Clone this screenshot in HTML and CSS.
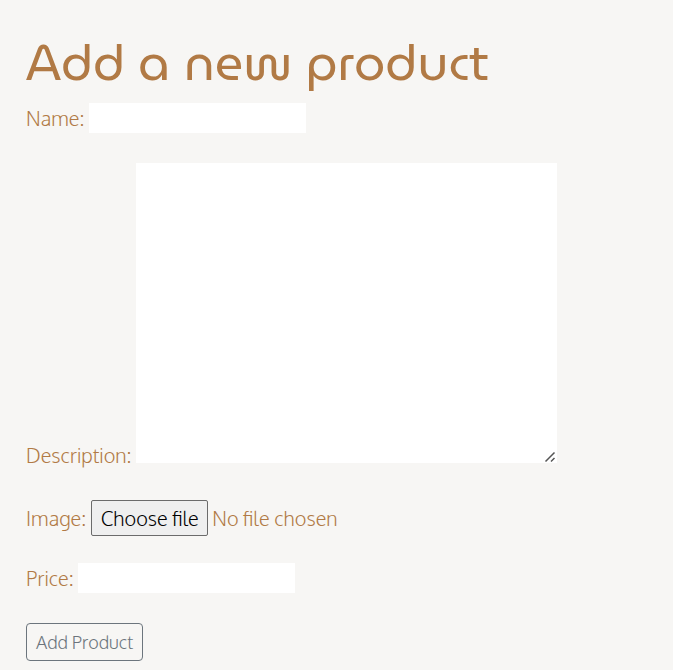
FILE: index.html
```html
<!DOCTYPE html>
<html lang="en">
<head>
<meta charset="utf-8">
<meta name="viewport" content="width=device-width, initial-scale=1">
<title>Add a new product</title>
<link rel="stylesheet" href="styles.css">
</head>
<body>
<main class="page">
  <h1 class="title">Add a new product</h1>
  <form class="form">
    <div class="field">
      <label for="name">Name:</label>
      <input class="input" id="name" type="text">
    </div>
    <div class="field">
      <label for="description">Description:</label>
      <textarea class="textarea" id="description"></textarea>
    </div>
    <div class="field">
      <label for="image">Image:</label>
      <input class="file" id="image" type="file">
      <label class="file-button" for="image">Choose file</label>
      <span>No file chosen</span>
    </div>
    <div class="field">
      <label for="price">Price:</label>
      <input class="input" id="price" type="text">
    </div>
    <button class="submit" type="submit">Add Product</button>
  </form>
</main>
</body>
</html>
```

FILE: styles.css
```css
* {
  box-sizing: border-box;
}

body {
  margin: 0;
  background: #f7f6f4;
  color: #b17a45;
  font-family: Oxygen, "Open Sans", "Noto Sans", sans-serif;
  font-size: 20px;
  font-weight: 300;
  line-height: 30px;
}

.page {
  padding: 33px 26px 9px;
}

.title {
  margin: 0 0 10px;
  font-family: MuseoModerno, Lato, sans-serif;
  font-size: 50px;
  font-weight: 400;
  line-height: 60px;
}

.form {
  display: flex;
  flex-direction: column;
  align-items: flex-start;
  gap: 30px;
}

.field {
  position: relative;
  max-width: 100%;
}

.input,
.textarea {
  margin: 0;
  border: 0;
  border-radius: 0;
  background: #fff;
  font: inherit;
}

.input {
  width: 217px;
  max-width: 100%;
  height: 30px;
  padding: 0 2px;
}

.textarea {
  width: 421px;
  max-width: 100%;
  height: 300px;
  padding: 2px;
}

.textarea::-webkit-resizer {
  background: url("data:image/svg+xml,%3Csvg xmlns='http://www.w3.org/2000/svg' width='15' height='15'%3E%3Cpath d='M3.5 13.5l9-9M9 13.5l3.5-3.5' fill='none' stroke='%23555' stroke-width='1.5'/%3E%3C/svg%3E") no-repeat right bottom;
}

/* The native control stays focusable behind its styled label. */
.file {
  position: absolute;
  width: 1px;
  height: 1px;
  opacity: 0;
}

.file-button {
  display: inline-block;
  margin-bottom: -3px;
  padding: 2px 8px 2px 9px;
  border: 1px solid #6b6b6b;
  border-radius: 2px;
  background: #efefef;
  color: #000;
}

.submit {
  padding: 3px 9px;
  border: 1px solid #6c757d;
  border-radius: 4px;
  background: transparent;
  color: #6c757d;
  font: inherit;
  font-size: 18px;
}
```
